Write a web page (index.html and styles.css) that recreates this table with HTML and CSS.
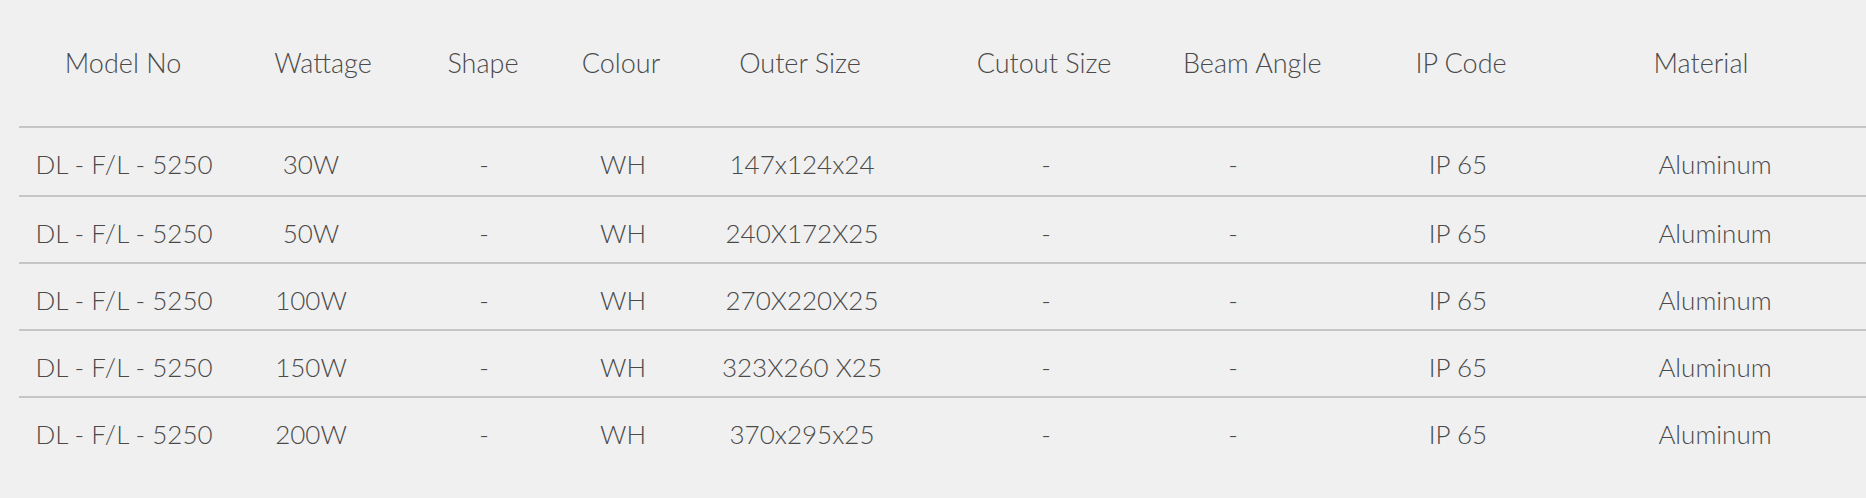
FILE: index.html
```html
<!DOCTYPE html>
<html lang="en">
<head>
<meta charset="utf-8">
<title>Specifications</title>
<link rel="stylesheet" href="styles.css">
</head>
<body>
<div class="spec-table">
  <div class="row head">
    <div class="cell">Model No</div>
    <div class="cell">Wattage</div>
    <div class="cell">Shape</div>
    <div class="cell">Colour</div>
    <div class="cell">Outer Size</div>
    <div class="cell">Cutout Size</div>
    <div class="cell">Beam Angle</div>
    <div class="cell">IP Code</div>
    <div class="cell">Material</div>
    <div class="cell"></div>
  </div>
  <div class="row body first">
    <div class="cell">DL - F/L - 5250</div>
    <div class="cell">30W</div>
    <div class="cell">-</div>
    <div class="cell">WH</div>
    <div class="cell">147x124x24</div>
    <div class="cell">-</div>
    <div class="cell">-</div>
    <div class="cell">IP 65</div>
    <div class="cell">Aluminum</div>
    <div class="cell"></div>
  </div>
  <div class="row body">
    <div class="cell">DL - F/L - 5250</div>
    <div class="cell">50W</div>
    <div class="cell">-</div>
    <div class="cell">WH</div>
    <div class="cell">240X172X25</div>
    <div class="cell">-</div>
    <div class="cell">-</div>
    <div class="cell">IP 65</div>
    <div class="cell">Aluminum</div>
    <div class="cell"></div>
  </div>
  <div class="row body">
    <div class="cell">DL - F/L - 5250</div>
    <div class="cell">100W</div>
    <div class="cell">-</div>
    <div class="cell">WH</div>
    <div class="cell">270X220X25</div>
    <div class="cell">-</div>
    <div class="cell">-</div>
    <div class="cell">IP 65</div>
    <div class="cell">Aluminum</div>
    <div class="cell"></div>
  </div>
  <div class="row body">
    <div class="cell">DL - F/L - 5250</div>
    <div class="cell">150W</div>
    <div class="cell">-</div>
    <div class="cell">WH</div>
    <div class="cell">323X260 X25</div>
    <div class="cell">-</div>
    <div class="cell">-</div>
    <div class="cell">IP 65</div>
    <div class="cell">Aluminum</div>
    <div class="cell"></div>
  </div>
  <div class="row body last">
    <div class="cell">DL - F/L - 5250</div>
    <div class="cell">200W</div>
    <div class="cell">-</div>
    <div class="cell">WH</div>
    <div class="cell">370x295x25</div>
    <div class="cell">-</div>
    <div class="cell">-</div>
    <div class="cell">IP 65</div>
    <div class="cell">Aluminum</div>
    <div class="cell"></div>
  </div>
</div>
</body>
</html>
```
FILE: styles.css
```css
html, body {
  margin: 0;
  padding: 0;
  background: #f0f0f0;
}
body {
  font-family: "Lato", "Liberation Sans", sans-serif;
  font-weight: 300;
  color: #4a4a4a;
  overflow: hidden;
}
.spec-table {
  margin-left: 19px;
}
.row {
  display: grid;
  border-bottom: 2px solid #c6c6c6;
}
.row.last {
  border-bottom: none;
}
.cell {
  text-align: center;
  white-space: nowrap;
  line-height: 40px;
}
.head {
  grid-template-columns: 208px 192px 128px 148px 210px 278px 120px 316px 164px 1fr;
  padding: 43px 0;
  font-size: 27px;
}
.body {
  grid-template-columns: 210px 164px 182px 96px 262px 226px 148px 302px 212px 1fr;
  padding: 16px 0 9px;
  font-size: 26px;
}
.body.first {
  padding-bottom: 11px;
}
```
